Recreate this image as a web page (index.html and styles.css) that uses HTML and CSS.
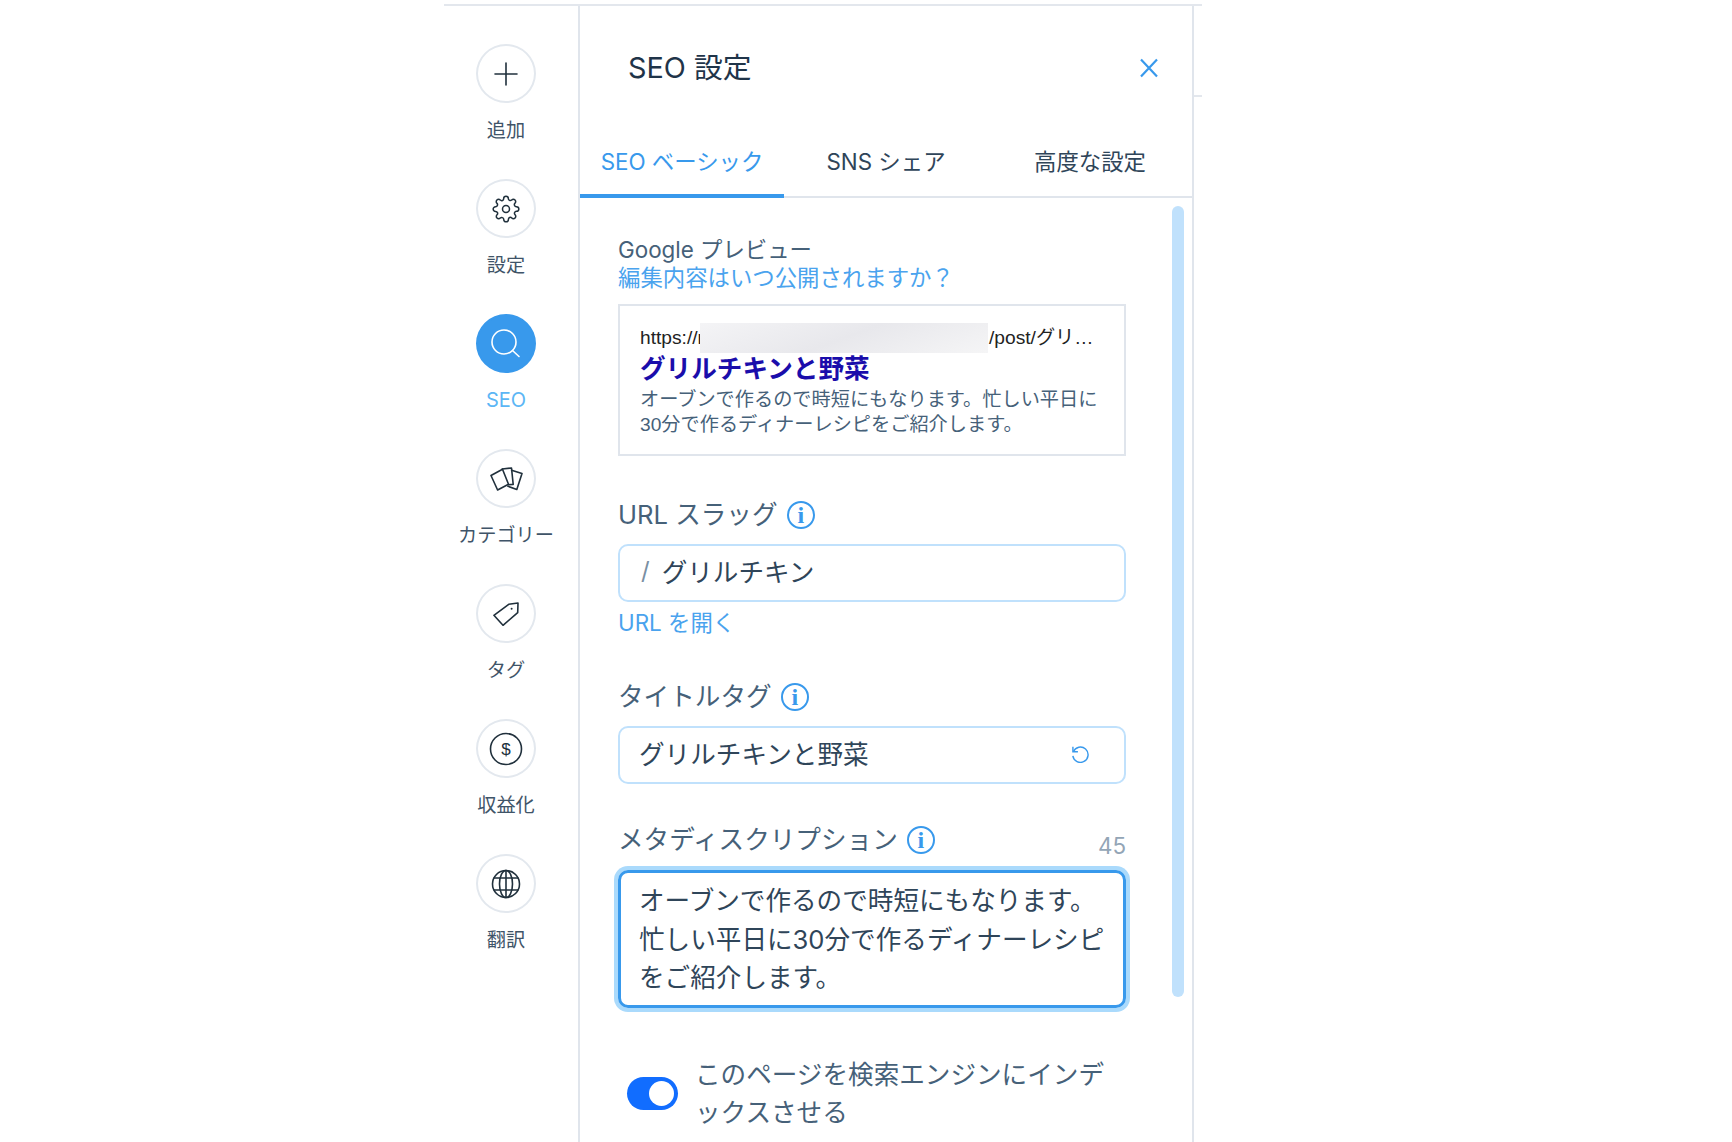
FILE: index.html
```html
<!DOCTYPE html>
<html lang="ja">
<head>
    <meta charset="UTF-8">
    <meta name="viewport" content="width=device-width, initial-scale=1.0">
    <title>SEO 設定</title>
    <link rel="stylesheet" href="styles.css">
</head>
<body>
<div class="app">
    <nav class="sidebar">
        <div class="nav-item">
            <div class="nav-circle">
                <svg width="24" height="24" viewBox="0 0 24 24" class="ico"><path d="M12 1v22M1 12h22"/></svg>
            </div>
            <span class="nav-label">追加</span>
        </div>
        <div class="nav-item">
            <div class="nav-circle">
                <svg width="28" height="28" viewBox="0 0 24 24" class="ico ico-thin"><circle cx="12" cy="12" r="3"/><path d="M19.4 15a1.65 1.65 0 0 0 .33 1.82l.06.06a2 2 0 0 1 0 2.83 2 2 0 0 1-2.83 0l-.06-.06a1.65 1.65 0 0 0-1.82-.33 1.65 1.65 0 0 0-1 1.51V21a2 2 0 0 1-2 2 2 2 0 0 1-2-2v-.09A1.65 1.65 0 0 0 9 19.4a1.65 1.65 0 0 0-1.82.33l-.06.06a2 2 0 0 1-2.83 0 2 2 0 0 1 0-2.83l.06-.06a1.65 1.65 0 0 0 .33-1.82 1.65 1.65 0 0 0-1.51-1H3a2 2 0 0 1-2-2 2 2 0 0 1 2-2h.09A1.65 1.65 0 0 0 4.6 9a1.65 1.65 0 0 0-.33-1.82l-.06-.06a2 2 0 0 1 0-2.83 2 2 0 0 1 2.83 0l.06.06a1.65 1.65 0 0 0 1.82.33H9a1.65 1.65 0 0 0 1-1.51V3a2 2 0 0 1 2-2 2 2 0 0 1 2 2v.09a1.65 1.65 0 0 0 1 1.51 1.65 1.65 0 0 0 1.82-.33l.06-.06a2 2 0 0 1 2.83 0 2 2 0 0 1 0 2.83l-.06.06a1.65 1.65 0 0 0-.33 1.82V9a1.65 1.65 0 0 0 1.51 1H21a2 2 0 0 1 2 2 2 2 0 0 1-2 2h-.09a1.65 1.65 0 0 0-1.51 1z"/></svg>
            </div>
            <span class="nav-label">設定</span>
        </div>
        <div class="nav-item active">
            <div class="nav-circle">
                <svg width="32" height="32" viewBox="0 0 32 32" class="ico"><circle cx="14" cy="14" r="12"/><path d="M22.5 22.5l6.5 6"/></svg>
            </div>
            <span class="nav-label">SEO</span>
        </div>
        <div class="nav-item">
            <div class="nav-circle">
                <svg width="33" height="24" viewBox="0 0 33 24" class="ico"><path d="M1 8.5L12.5 2.2L18.5 17.2L7.6 23Z"/><path d="M12.2 2L21.5 1L23.2 17.4L18.4 17.7"/><path d="M21.6 3.2L32 6.6L26.8 22.4L18 19.3"/></svg>
            </div>
            <span class="nav-label">カテゴリー</span>
        </div>
        <div class="nav-item">
            <div class="nav-circle">
                <svg width="26" height="24" viewBox="0 0 26 24" class="ico"><path d="M15.7 2.3L25 1L24.7 10.7L10 23.3L.9 13.3Z"/><circle cx="18.6" cy="6.8" r="1" class="ico-dot"/></svg>
            </div>
            <span class="nav-label">タグ</span>
        </div>
        <div class="nav-item">
            <div class="nav-circle">
                <svg width="34" height="34" viewBox="0 0 34 34" class="ico"><circle cx="17" cy="17" r="15.5"/><text x="17" y="23" class="ico-text">$</text></svg>
            </div>
            <span class="nav-label">収益化</span>
        </div>
        <div class="nav-item">
            <div class="nav-circle">
                <svg width="30" height="30" viewBox="0 0 30 30" class="ico"><circle cx="15" cy="15" r="13.5"/><ellipse cx="15" cy="15" rx="6.5" ry="13.5"/><path d="M15 1.5v27M3 9h24M3 21h24"/></svg>
            </div>
            <span class="nav-label">翻訳</span>
        </div>
    </nav>

    <main class="panel">
        <header class="panel-head">
            <h1 class="panel-title">SEO 設定</h1>
            <svg width="20" height="20" viewBox="0 0 20 20" class="close-ico"><path d="M2 1.5l16 17M18 1.5l-16 17"/></svg>
        </header>

        <div class="tabs">
            <div class="tab active">SEO ベーシック</div>
            <div class="tab">SNS シェア</div>
            <div class="tab">高度な設定</div>
        </div>

        <div class="panel-body">
            <div class="scroll-thumb"></div>

            <div class="preview-head">Google プレビュー</div>
            <a class="link preview-link">編集内容はいつ公開されますか？</a>

            <div class="preview">
                <div class="preview-url">
                    <span class="url-start">https://r</span>
                    <span class="url-mask"></span>
                    <span class="url-end">/post/グリ…</span>
                </div>
                <div class="preview-title">グリルチキンと野菜</div>
                <div class="preview-desc">オーブンで作るので時短にもなります。忙しい平日に<br>30分で作るディナーレシピをご紹介します。</div>
            </div>

            <div class="field-label label-url">URL スラッグ <span class="info">i</span></div>
            <div class="input input-slug"><span class="slash">/</span>グリルチキン</div>
            <a class="link open-link">URL を開く</a>

            <div class="field-label label-title">タイトルタグ <span class="info">i</span></div>
            <div class="input input-title">
                <span>グリルチキンと野菜</span>
                <svg width="20" height="20" viewBox="0 0 24 24" class="reset-ico"><path d="M3.5 4.5v6h6"/><path d="M4 10.5a9.2 9.2 0 1 1-.6 5"/></svg>
            </div>

            <div class="meta-row">
                <div class="field-label">メタディスクリプション <span class="info">i</span></div>
                <span class="count">45</span>
            </div>
            <div class="textarea">オーブンで作るので時短にもなります。<br>忙しい平日に30分で作るディナーレシピ<br>をご紹介します。</div>

            <div class="index-row">
                <div class="toggle"><span class="knob"></span></div>
                <div class="index-text">このページを検索エンジンにインデ<br>ックスさせる</div>
            </div>
        </div>
    </main>

    <div class="tail"></div>
</div>
</body>
</html>
```

FILE: styles.css
```css
html, body {
    margin: 0;
    height: 100%;
    overflow: hidden;
    background: #fff;
}
body {
    font-family: Inter, "Noto Sans CJK JP", sans-serif;
    font-weight: 400;
    color: #466179;
}
.app {
    display: flex;
    width: 758px;
    height: 1138px;
    margin: 4px 0 0 444px;
    border-top: 2px solid #e3e7ed;
    box-sizing: border-box;
}

/* left rail */
.sidebar {
    width: 134px;
    padding: 38px 10px 0 0;
    box-sizing: border-box;
    flex: none;
}
.nav-item {
    display: flex;
    flex-direction: column;
    align-items: center;
    height: 135px;
}
.nav-circle {
    display: flex;
    align-items: center;
    justify-content: center;
    width: 60px;
    height: 59px;
    border: 2px solid #e3e8ee;
    border-radius: 50%;
    box-sizing: border-box;
}
.nav-label {
    margin-top: 14px;
    font-size: 19.2px;
    line-height: 26px;
    white-space: nowrap;
    color: #3f5468;
}
.nav-item.active .nav-circle {
    background: #3899ec;
    border-color: #3899ec;
}
.nav-item.active .nav-label {
    font-size: 20px;
    color: #5cb6f5;
}
.nav-item.active .ico {
    stroke: #fff;
}
.ico {
    fill: none;
    stroke: #20303c;
    stroke-width: 1.6;
    stroke-linejoin: round;
    stroke-linecap: round;
}
.ico-thin {
    stroke-width: 1.3;
}
.ico-dot {
    fill: #20303c;
    stroke: none;
}
.ico-text {
    font-family: "Liberation Sans", sans-serif;
    font-size: 17px;
    text-anchor: middle;
    fill: #20303c;
    stroke: none;
}

/* panel */
.panel {
    width: 616px;
    flex: none;
    border-left: 2px solid #e0e5ec;
    border-right: 2px solid #e0e5ec;
    box-sizing: border-box;
}
.panel-head {
    display: flex;
    align-items: flex-start;
    justify-content: space-between;
    height: 124px;
    padding: 40px 33px 0 48px;
    box-sizing: border-box;
}
.panel-title {
    margin: 0;
    font-size: 28.8px;
    line-height: 44px;
    font-weight: 400;
    color: #1f3449;
}
.close-ico {
    margin-top: 12px;
    fill: none;
    stroke: #3899ec;
    stroke-width: 2.2;
}
.tabs {
    display: grid;
    grid-template-columns: repeat(3, 1fr);
    height: 68px;
    border-bottom: 2px solid #e0e5ec;
    box-sizing: border-box;
}
.tab {
    height: 68px;
    line-height: 64px;
    border-bottom: 4px solid transparent;
    box-sizing: border-box;
    font-size: 22.4px;
    text-align: center;
    color: #2f4559;
}
.tab.active {
    color: #3899ec;
    border-bottom-color: #3899ec;
}
.panel-body {
    position: relative;
    padding: 38px 66px 0 38px;
}
.scroll-thumb {
    position: absolute;
    top: 8px;
    right: 8px;
    width: 12px;
    height: 791px;
    border-radius: 6px;
    background: #c0e1fc;
}
.link {
    display: block;
    color: #4aa3ee;
}
.preview-head {
    font-size: 22.4px;
    line-height: 28px;
}
.preview-link {
    font-size: 22.4px;
    line-height: 28px;
}

/* google preview */
.preview {
    height: 152px;
    margin-top: 12px;
    padding: 19px 20px 0;
    border: 2px solid #e0e5ec;
    box-sizing: border-box;
    font-family: "Liberation Sans", "Noto Sans CJK JP", sans-serif;
    font-weight: 400;
}
.preview-url {
    display: flex;
    align-items: center;
    height: 26px;
    font-size: 19.2px;
    line-height: 26px;
    color: #222;
}
.url-start {
    width: 60px;
    height: 26px;
    overflow: hidden;
    white-space: nowrap;
    flex: none;
}
.url-mask {
    width: 288px;
    height: 30px;
    flex: none;
    background: linear-gradient(160deg, #f4f4f6 0%, #e8e8ec 50%, #f5f5f6 100%);
}
.url-end {
    height: 26px;
    margin-left: 1px;
    white-space: nowrap;
}
.preview-title {
    font-size: 25.6px;
    line-height: 36px;
    font-weight: 700;
    color: #1a0dab;
}
.preview-desc {
    font-size: 19.2px;
    line-height: 25px;
    color: #466179;
}

/* fields */
.field-label {
    display: flex;
    align-items: center;
    font-size: 25.6px;
    line-height: 30px;
    white-space: pre;
}
.label-url {
    margin-top: 44px;
}
.label-title {
    margin-top: 45px;
}
.info {
    display: inline-block;
    width: 28px;
    height: 28px;
    margin-left: 2px;
    border: 2px solid #3899ec;
    border-radius: 50%;
    box-sizing: border-box;
    font-family: "Liberation Serif", serif;
    font-weight: 700;
    font-size: 24px;
    line-height: 24px;
    text-align: center;
    color: #3899ec;
}
.input {
    display: flex;
    align-items: center;
    height: 58px;
    margin-top: 14px;
    padding: 0 21px 5px;
    border: 2px solid #c0e1fc;
    border-radius: 10px;
    box-sizing: border-box;
    font-size: 25.6px;
    color: #2f4559;
}
.input-title {
    justify-content: space-between;
    padding: 0 34px 5px 19px;
}
.reset-ico {
    fill: none;
    stroke: #3899ec;
    stroke-width: 1.7;
}
.slash {
    margin-right: 12px;
    color: #7a8fa3;
    font-size: 24px;
}
.open-link {
    margin-top: 7px;
    font-size: 22.4px;
    line-height: 28px;
}
.meta-row {
    display: flex;
    justify-content: space-between;
    align-items: flex-start;
    height: 30px;
    margin-top: 41px;
}
.count {
    padding-top: 6px;
    font-size: 22.4px;
    line-height: 30px;
    color: #93a5b6;
}
.textarea {
    height: 138px;
    margin-top: 15px;
    padding: 9px 0 0 18px;
    border: 3px solid #3899ec;
    border-radius: 10px;
    box-shadow: 0 0 0 4px #aadafc;
    box-sizing: border-box;
    font-size: 25.6px;
    line-height: 38.5px;
    white-space: nowrap;
    color: #2f4559;
}

/* index toggle */
.index-row {
    display: flex;
    align-items: center;
    gap: 17px;
    margin-top: 48px;
    padding-left: 9px;
}
.toggle {
    display: flex;
    align-items: center;
    justify-content: flex-end;
    width: 51px;
    height: 33px;
    margin-bottom: 1px;
    padding-right: 4px;
    border-radius: 17px;
    background: #116dff;
    box-sizing: border-box;
    flex: none;
}
.knob {
    width: 25px;
    height: 25px;
    border-radius: 50%;
    background: #fff;
}
.index-text {
    font-size: 25.6px;
    line-height: 38px;
}

/* stub of whatever sits behind the panel */
.tail {
    width: 8px;
    height: 2px;
    margin-top: 89px;
    background: #e3e7ed;
}
```
